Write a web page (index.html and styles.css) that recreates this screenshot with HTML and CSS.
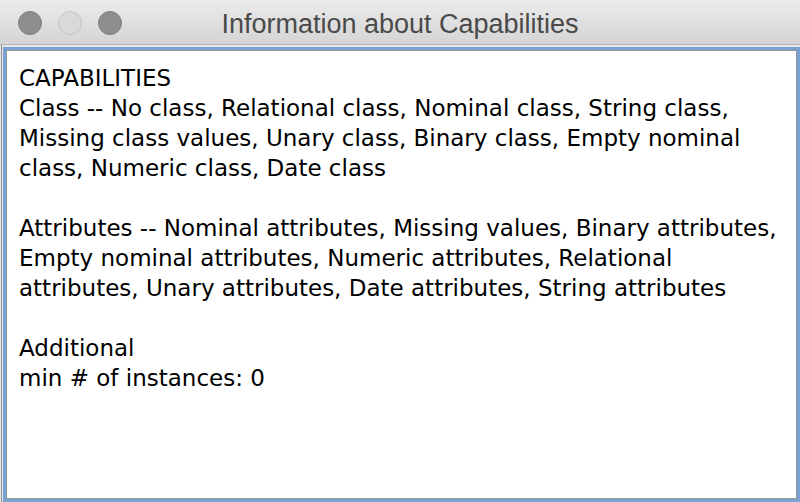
FILE: index.html
```html
<!DOCTYPE html>
<html>
<head>
<meta charset="utf-8">
<link rel="stylesheet" href="styles.css">
</head>
<body>
<div class="window">
  <div class="titlebar">
    <div class="lights">
      <span class="light dark"></span>
      <span class="light pale"></span>
      <span class="light dark"></span>
    </div>
    <div class="title">Information about Capabilities</div>
  </div>
  <div class="body-area">
    <div class="frame">
      <div class="text">
        <div class="line">CAPABILITIES</div>
        <div class="line">Class -- No class, Relational class, Nominal class, String class,</div>
        <div class="line">Missing class values, Unary class, Binary class, Empty nominal</div>
        <div class="line">class, Numeric class, Date class</div>
        <div class="line">&nbsp;</div>
        <div class="line">Attributes -- Nominal attributes, Missing values, Binary attributes,</div>
        <div class="line">Empty nominal attributes, Numeric attributes, Relational</div>
        <div class="line">attributes, Unary attributes, Date attributes, String attributes</div>
        <div class="line">&nbsp;</div>
        <div class="line">Additional</div>
        <div class="line">min # of instances: 0</div>
      </div>
    </div>
  </div>
</div>
</body>
</html>
```
FILE: styles.css
```css
html, body {
  margin: 0;
  padding: 0;
  width: 800px;
  height: 502px;
  overflow: hidden;
  background: #e8e8e8;
}
.window {
  display: flex;
  flex-direction: column;
  height: 502px;
}
.titlebar {
  position: relative;
  height: 44px;
  flex: 0 0 44px;
  border-bottom: 1px solid #b6b6b6;
  border-radius: 5px 5px 0 0;
  background: linear-gradient(#ebebeb, #d5d5d5);
  display: flex;
  align-items: center;
  justify-content: center;
}
.lights {
  position: absolute;
  left: 18px;
  top: 11px;
  display: flex;
  gap: 16px;
}
.light {
  width: 24px;
  height: 24px;
  border-radius: 50%;
  box-sizing: border-box;
}
.light.dark {
  background: #8e8e8e;
  border: 1px solid #7e7e7e;
}
.light.pale {
  background: #d9d9d9;
  border: 1px solid #c4c4c4;
}
.title {
  font-family: "Liberation Sans", Arial, sans-serif;
  font-size: 27px;
  color: #4a4a4a;
  margin-top: 4px;
}
.body-area {
  flex: 1;
  display: flex;
  margin-left: 1px;
  border-left: 1px solid #8f8f8f;
  padding: 2px 0 0 1px;
}
.frame {
  flex: 1;
  display: flex;
  border: 3px solid #7aa2d4;
}
.text {
  flex: 1;
  background: #ffffff;
  border: 1px solid #969696;
  padding: 12px 0 0 12px;
  font-family: "DejaVu Sans", sans-serif;
  font-size: 23px;
  line-height: 30px;
  color: #000;
  white-space: nowrap;
}
```
